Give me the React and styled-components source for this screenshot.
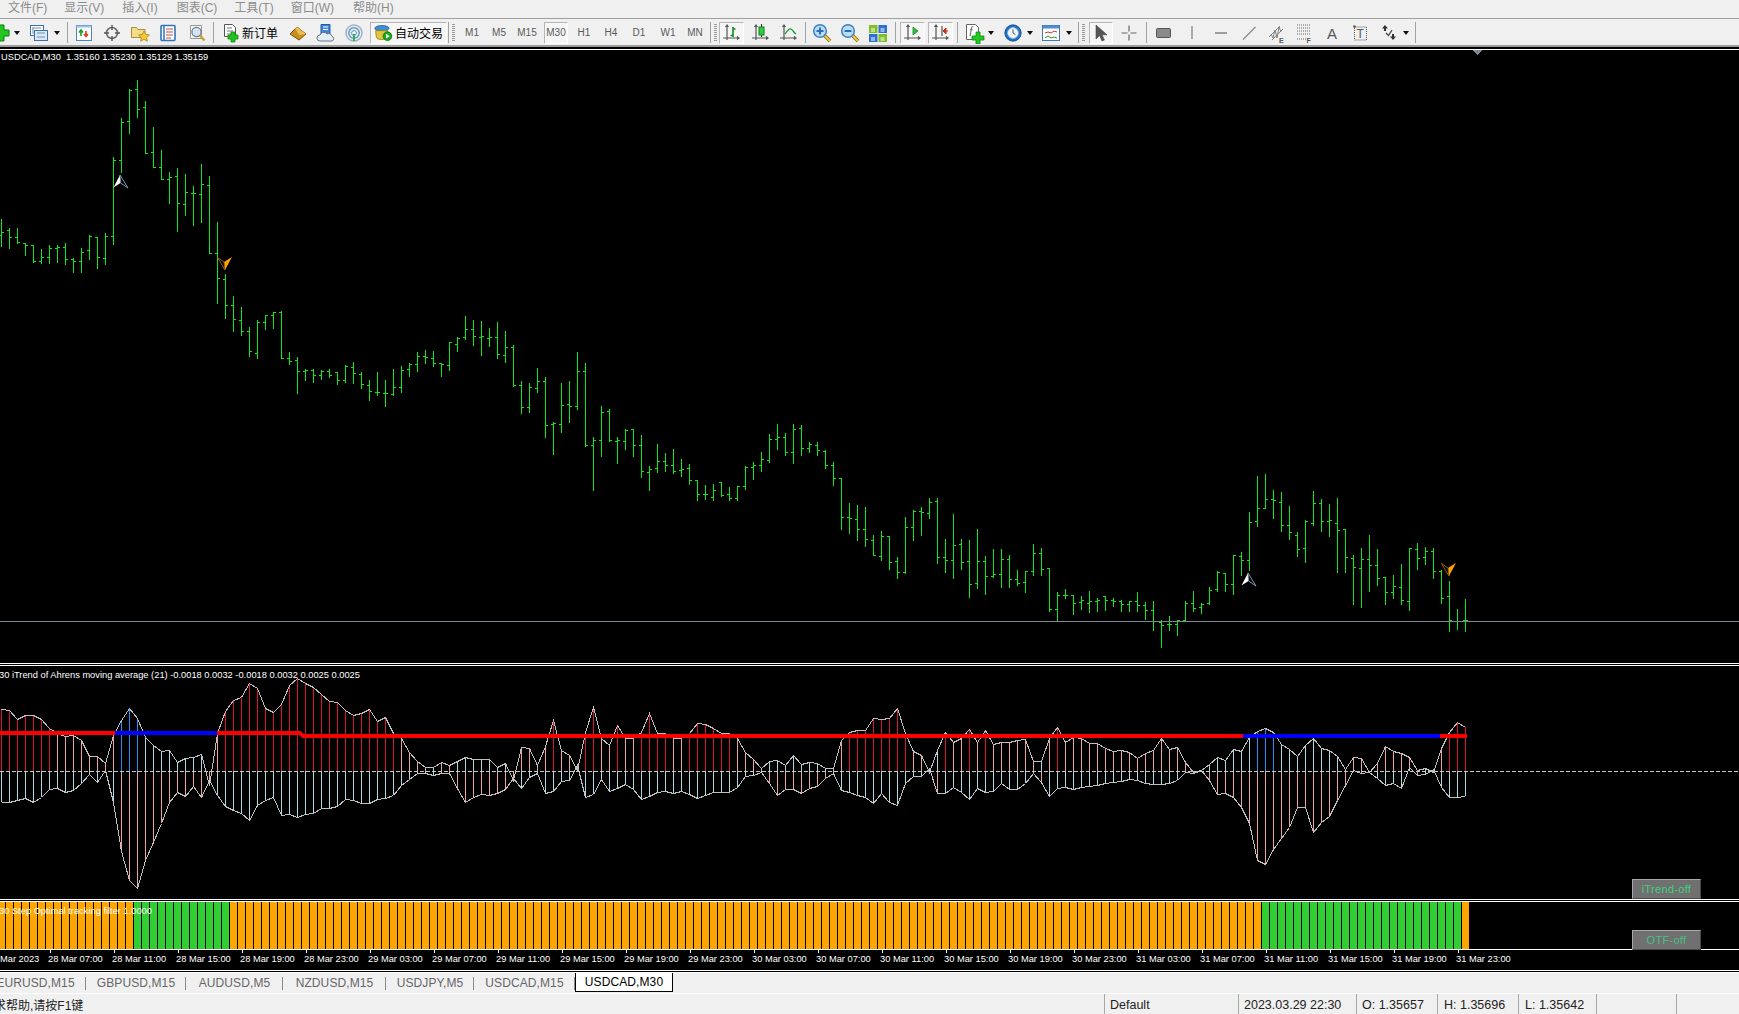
import React from "react";
import styled, { createGlobalStyle } from "styled-components";

const Global = createGlobalStyle`
  html, body { margin: 0; padding: 0; background: #000; overflow: hidden; }
  #root { width: 1739px; height: 1014px; overflow: hidden; }
`;

const UI = `"Liberation Sans", "Noto Sans CJK SC", sans-serif`;

const Page = styled.div`
  width: 1739px; height: 1014px; display: flex; flex-direction: column;
  background: #000; font-family: ${UI}; overflow: hidden;
`;
const MenuBar = styled.nav`
  height: 18px; flex: none; display: flex; background: #f0f0f0; padding-left: 8px;
  border-bottom: 1px solid #a0a0a0; box-sizing: content-box; font-size: 12px; color: #8c8c8c; line-height: 16px;
`;
const MenuItem = styled.span`margin-right: ${p => p.$gap}px; white-space: nowrap;`;

const Toolbar = styled.div`
  height: 25px; flex: none; display: flex; align-items: center; background: #f0f0f0;
  border-bottom: 2px solid #9c9c9c; border-top: 0; padding-top: 1px; overflow: hidden;
`;
const Row = styled.div`display: flex; align-items: center; margin-left: -6px; height: 100%;`;
const Slot = styled.div`
  width: ${p => p.$w}px; flex: none; height: 100%; display: flex; align-items: center; justify-content: center;
`;
const Pressed = styled(Slot)`
  height: 22px; box-sizing: border-box; background: #f6f6f6;
  border: 1px solid; border-color: #b6b6b6 #fff #fff #b6b6b6;
`;
const Spacer = styled.div`width: ${p => p.$w}px; flex: none;`;
const Sep = styled(Slot)`
  &::before { content: ""; width: 1px; height: 21px; background: #a2a2a2; }
`;
const Grip = styled.div`
  width: 3px; height: 18px; flex: none; margin: 0 ${p => p.$m || 0}px;
  background: repeating-linear-gradient(to bottom, #9a9a9a 0 1px, transparent 1px 2px);
`;
const Frame = styled(Slot)`font-size: 10px; color: #5a5a5a;`;
const PressedFrame = styled(Pressed)`font-size: 10px; color: #5a5a5a;`;
const Drop = styled(Slot)`
  &::before { content: ""; border: 3px solid transparent; border-top: 4px solid #111; border-bottom: 0; }
`;
const OrderButton = styled(Slot)`font-size: 12px; color: #000; gap: 1px; justify-content: flex-start; padding-left: 5px; box-sizing: border-box; white-space: nowrap;`;
const AutoButton = styled(Pressed)`font-size: 12px; color: #000; gap: 2px; white-space: nowrap;`;
const Glyph = styled.svg`flex: none; display: block;`;

const Rule = styled.div`height: ${p => p.$h}px; flex: none; background: ${p => p.$c};`;
const Pane = styled.section`
  position: relative; flex: none; height: ${p => p.$h}px; background: #000; overflow: visible;
`;
const Plot = styled.svg`display: block; width: 1739px; height: 100%; overflow: hidden;`;
const PaneLabel = styled.div`
  position: absolute; left: ${p => p.$left || 0}px; top: ${p => p.$top}px; white-space: nowrap;
  font-size: 9.3px; line-height: 12px; color: #fff; pointer-events: none;
`;
const PaneButton = styled.div`
  position: absolute; left: 1632px; bottom: ${p => p.$bottom}px; width: 69px; height: 20px; box-sizing: border-box;
  display: flex; align-items: center; justify-content: center; z-index: 2;
  background: #707070; border: 1px solid; border-color: #a8a8a8 #4a4a4a #4a4a4a #a8a8a8;
  font-size: 11px; letter-spacing: .3px; color: ${p => p.$c};
`;
const Axis = styled.div`
  height: 20px; flex: none; display: flex; background: #000; color: #fff; font-size: 9.3px; line-height: 18px; overflow: hidden;
`;
const AxisHead = styled.div`width: 49px; flex: none; white-space: nowrap; text-align: right; padding-right: 13px; box-sizing: border-box;`;
const AxisCell = styled.div`
  width: 64px; flex: none; position: relative; white-space: nowrap; text-indent: -1px;
  &::before { content: ""; position: absolute; left: 1px; top: 0; width: 1px; height: 3px; background: #fff; }
`;
const TabStrip = styled.div`
  height: 20px; flex: none; display: flex; background: #f0f0f0; overflow: hidden; font-size: 12px;
`;
const Tabs = styled.div`display: flex; margin-left: -15px; height: 100%;`;
const Tab = styled.div`
  width: ${p => p.$w}px; flex: none; box-sizing: border-box; display: flex; align-items: center; justify-content: center;
  color: ${p => (p.$active ? "#000" : "#666")}; background: ${p => (p.$active ? "#fff" : "transparent")};
  position: relative; white-space: nowrap; letter-spacing: .1px;
  ${p => p.$active ? "border: 1px solid #000; border-top: 0; height: 19px;" : `
    &::after { content: ""; position: absolute; right: 0; top: 4px; height: 13px; width: 1px; background: #8a8a8a; }`}
`;
const StatusBar = styled.footer`
  flex: 1; display: grid; grid-template-columns: 1105px 134px 118px 81px 81px 78px 80px 1fr;
  background: #f0f0f0; font-size: 12.5px; color: #222; border-top: 1px solid #fff; box-sizing: border-box;
`;
const StatusCell = styled.div`
  display: flex; align-items: center; overflow: hidden; white-space: nowrap; padding-left: ${p => p.$pad || 5}px; height: 21px;
  border-right: 1px solid #a8a8a8;
  &:first-child { padding-left: 0; margin-left: -6px; font-size: 12px; }
  &:last-child { border-right: 0; }
`;

/* ---- market data: page pixel rows of high, low, open, close for each M30 bar ---- */
const ohlc = [
219,246,235,232, 228,248,230,237, 228,243,237,242, 243,255,243,245, 245,262,245,261, 249,263,261,257, 245,263,257,248, 245,262,248,247,
243,264,247,259, 258,272,259,261, 248,272,261,252, 235,259,250,236, 237,268,237,257, 233,264,258,236, 157,244,236,160, 118,172,160,122,
89,133,121,90, 80,117,89,109, 101,153,107,153, 127,167,152,167, 150,179,167,179, 172,203,179,177, 168,231,176,203, 174,215,204,192,
186,225,193,193, 164,222,194,184, 176,253,185,253, 222,303,253,278, 274,318,279,305, 296,331,305,319, 307,335,320,331, 327,356,331,351,
320,358,353,322, 315,329,322,315, 312,328,315,312, 311,358,312,358, 352,364,358,361, 357,393,360,371, 369,380,371,370, 369,382,370,375,
370,379,375,371, 369,377,371,375, 372,384,372,380, 365,382,380,366, 362,383,367,373, 372,388,374,384, 380,400,385,391, 372,395,392,392,
380,406,393,393, 369,395,394,387, 366,392,387,370, 363,376,369,364, 352,371,364,356, 350,363,356,357, 351,366,358,363, 363,376,363,364,
342,370,365,342, 337,351,344,338, 316,339,337,329, 320,345,329,336, 321,355,337,336, 328,346,338,337, 322,358,337,354, 331,362,355,347,
345,386,347,385, 381,413,385,407, 383,412,407,387, 368,392,388,381, 377,437,381,425, 422,454,424,423, 383,432,424,405, 381,422,404,406,
352,409,406,371, 363,446,371,445, 437,490,445,440, 406,456,440,412, 409,441,411,440, 437,463,441,440, 429,449,441,430, 429,456,429,445,
435,477,445,471, 466,490,472,469, 444,472,468,461, 453,471,461,465, 449,473,465,471, 459,476,470,469, 464,484,468,480, 480,500,480,494,
485,499,494,494, 484,500,497,490, 482,496,482,495, 487,500,494,498, 486,500,498,486, 466,489,486,467, 462,479,467,465, 452,471,465,459,
434,462,460,439, 424,449,439,437, 433,455,437,452, 424,463,452,429, 425,455,428,448, 442,452,448,444, 442,455,445,450, 450,468,451,465,
462,485,465,478, 478,529,478,517, 503,533,517,518, 505,540,519,529, 507,546,529,539, 535,555,540,555, 531,560,556,536, 536,569,536,562,
557,578,561,572, 517,573,572,527, 510,540,527,511, 507,535,511,512, 498,518,513,502, 498,563,501,557, 539,572,557,560, 514,578,560,545,
539,569,544,562, 540,597,561,584, 529,588,583,561, 556,594,561,576, 549,577,576,574, 549,587,574,559, 555,587,559,579, 570,585,579,583,
571,592,582,571, 544,575,571,553, 548,575,553,569, 568,611,568,609, 592,621,609,595, 589,598,595,595, 595,614,595,603, 596,609,602,600,
591,612,603,601, 598,611,601,600, 596,610,596,600, 598,606,600,601, 600,611,601,604, 601,611,604,601, 592,611,601,605, 602,619,605,610,
601,630,610,621, 620,647,622,625, 616,630,624,624, 620,635,624,620, 601,621,620,603, 591,611,603,608, 603,613,607,604, 587,604,603,590,
571,591,589,572, 573,591,573,584, 555,594,584,555, 552,575,556,560, 512,570,560,522, 476,526,521,508, 474,508,508,499, 490,518,499,500,
492,531,502,525, 506,539,525,532, 532,556,535,549, 520,562,548,521, 491,525,523,503, 499,531,503,521, 504,536,521,520, 498,572,523,530,
529,572,529,557, 555,604,558,567, 548,607,568,559, 535,591,559,565, 549,585,565,578, 577,604,577,592, 575,598,592,586, 564,604,587,600,
548,610,601,548, 543,569,549,558, 547,564,557,551, 548,578,551,571, 570,603,571,598, 581,631,596,620, 609,629,621,621, 599,631,620,620,
];
const barX = i => 1 + 8 * i;
const barCount = ohlc.length / 4;
let barPath = "";
for (let i = 0; i < barCount; i++) {
  const [h, l, o, c] = ohlc.slice(i * 4, i * 4 + 4);
  const x = barX(i);
  barPath += `M${x + .5} ${h}V${l + 1}M${x - 2} ${o + .5}H${x}M${x + 1} ${c + .5}H${x + 3}`;
}

const fromZoom = (base, list) => list.map(z => Math.round(base + z / 3));
const upper = [
  ...fromZoom(660, [148,150,178,165,165,178,205,220,228,225,240,287,287,310,225,180,143,175,232,255,272,270,305,293,292,283,375,220,153,120,110,70,83,143,157,133,75,55,70,82,103,122,125,150,165,160,148,183,172,220]),
  ...fromZoom(690, [145,185,212,232,232,215,225,212,200,208,208,208,232,220,270,172,175,225,168,90,180,195,240,125,50,145,165,105,145,145,125,68,130,130,145,145,130,98,103,113,130,130,145,185,208,235,213,210,225,195,222,217,218,235,235,150,125,121,121,83,87,85,55,130,183,195,245,180,125,157,145,118,155,120,163,157,155,150,148,213,213,145,112,157,140,145,160,160,175,183,181,186,203,190,180,145,177,172,215,245]),
  ...fromZoom(680, [270,252,230,240,208,212,170,152,145,155,192,207,228,195,175,205,210,228,268,232,235,275,248,197,212,218,232,270,263,275,205,155,127,140]),
];
const lower = [
  ...fromZoom(660, [427,425,420,415,427,410,388,385,395,390,370,343,366,330,425,572,660,685,600,545,490,425,395,408,378,410,360,405,437,450,460,480,435,420,410,465,462,470,462,460,445,445,437,417,420,428,430,418,415,405]),
  ...fromZoom(690, [285,268,250,250,256,250,250,295,337,322,312,316,310,296,265,295,262,250,310,303,272,270,225,322,312,268,303,295,283,298,328,318,305,303,310,303,312,325,315,307,307,307,290,258,254,245,280,315,298,298,308,293,288,263,250,300,306,316,322,340,310,335,346,280,258,258,235,310,310,290,305,328,295,307,303,280,298,298,278,250,275,318,295,290,298,292,287,285,280,277,272,268,270,278,283,283,280,270,245,250]),
  ...fromZoom(680, [270,300,342,340,352,382,430,540,552,507,475,440,380,380,455,425,408,360,315,270,278,275,295,315,310,323,260,285,282,267,322,352,352,348]),
];
const ZERO = 771;
const inBlue = i => (i >= 15 && i <= 26) || (i >= 156 && i <= 180);
const lineAt = i => (i < 38 ? 733 : 736);
const CRIMSON = "#dc143c", PINK = "#eea0a4", SKY = "#add8e6", DODGER = "#1e90ff";
const upColor = (i) => {
  const u = ZERO - upper[i], d = lower[i] - ZERO;
  if (upper[i] < lineAt(i)) return inBlue(i) ? DODGER : CRIMSON;
  return u > d ? PINK : SKY;
};
const downColor = (i) => (ZERO - upper[i] >= lower[i] - ZERO ? SKY : PINK);
const poly = a => a.map((y, i) => `${barX(i) + .5},${y + .5}`).join(" ");

const orangeGreen = i => (i >= 17 && i <= 28) || (i >= 158 && i <= 182);

const UpArrow = ({ x, y }) => (
  <g transform={`translate(${x} ${y})`}>
    <polygon points="7,0 .5,12.5 7.5,8" fill="#fff" />
    <polygon points="7,0 15,13 7.5,8" fill="#000" stroke="#8fa8c4" strokeWidth=".9" />
  </g>
);
const DownArrow = ({ x, y }) => (
  <g transform={`translate(${x} ${y})`}>
    <polygon points="8,13 15,0 7,5" fill="#ffa500" />
    <polygon points="8,13 .5,.5 7,5" fill="#000" stroke="#a86c08" strokeWidth=".9" />
  </g>
);

/* ---- toolbar drawings ---- */
const Ic = ({ w = 20, h = 20, vw, vh, children }) => <Glyph width={w} height={h} viewBox={`0 0 ${vw || w} ${vh || h}`}>{children}</Glyph>;
const axes = <path d="M5 2v15M1 15h16M3.5 4 5 2l1.5 2M15 13.5l2 1.5-2 1.5" fill="none" stroke="#555" strokeWidth="1.2" />;
const Icons = {
  plus: <Ic><path d="M7 2h6v5h5v6h-5v5H7v-5H2V7h5z" fill="#22c622" stroke="#0d7d0d" /></Ic>,
  profiles: <Ic><rect x="1.5" y="2.5" width="13" height="10" fill="#fff" stroke="#3e6fa6" /><rect x="5.5" y="7.5" width="13" height="10" fill="#dbe9f7" stroke="#3e6fa6" /><path d="M3 5h9M4 5v6M8 10h8M8 14h8" stroke="#6f8fb0" /></Ic>,
  watch: <Ic><rect x="2.5" y="2.5" width="15" height="15" fill="#fff" stroke="#4a86c5" /><path d="M2.5 3.5h15" stroke="#9cc3e8" strokeWidth="2" /><path d="M7 13V8M5 9.5 7 7l2 2.5" fill="none" stroke="#18a018" strokeWidth="1.6" /><path d="M12 8v5M10 11l2 2.5 2-2.5" fill="none" stroke="#d8402a" strokeWidth="1.6" /></Ic>,
  target: <Ic><circle cx="10" cy="10" r="5.5" fill="none" stroke="#666" strokeWidth="1.5" /><path d="M10 2v5M10 13v5M2 10h5M13 10h5" stroke="#555" strokeWidth="1.4" /></Ic>,
  folder: <Ic><path d="M1.5 4.5h5l1.5 2h7v8h-13.5z" fill="#f3dc8a" stroke="#a98d3a" /><path d="M14 8l1.7 3.4 3.8.5-2.8 2.6.7 3.7-3.4-1.8-3.4 1.8.7-3.7-2.8-2.6 3.8-.5z" fill="#f6c92e" stroke="#a98520" strokeWidth=".8" /></Ic>,
  book: <Ic><rect x="3" y="2.5" width="14" height="15" rx="1" fill="#fff" stroke="#2f74bd" strokeWidth="1.6" /><path d="M6 3v14" stroke="#2f74bd" strokeWidth="1.5" /><path d="M8 6h7M8 9h7M8 12h7M8 15h5" stroke="#c04a4a" /></Ic>,
  scope: <Ic><path d="M3.5 2.5h11v13h-11z" fill="#f4f4f4" stroke="#9a9a9a" /><circle cx="9.5" cy="9" r="4.6" fill="#d5e5ef" stroke="#6d7f90" strokeWidth="1.3" /><path d="M13 12.5l4.5 5" stroke="#c9a22e" strokeWidth="2.4" /></Ic>,
  order: <Ic><path d="M3.5 1.5h8l3 3v9h-11z" fill="#fff" stroke="#555" /><path d="M6 5h5M6 8h6M6 11h4" stroke="#777" /><path d="M10 9h4v3h3v4h-3v3h-4v-3H7v-4h3z" fill="#1ec31e" stroke="#0f8a0f" strokeWidth=".8" /></Ic>,
  diamond: <Ic><path d="M2 11l7-7 9 7-7 6z" fill="#c88f1f" stroke="#7d520e" /><path d="M9 4l9 7-7 1-4-7" fill="#eabe55" /></Ic>,
  cloud: <Ic><path d="M5 1.5h9v11H5z" fill="#3d86d8" stroke="#235c9e" /><path d="M7 4h5M7 6.5h5" stroke="#fff" /><path d="M4 18a3 3 0 0 1 0-6 4 4 0 0 1 7-1 3.4 3.4 0 0 1 5 2.4A2.4 2.4 0 0 1 16 18z" fill="#e5edf4" stroke="#65768a" /></Ic>,
  signal: <Ic><circle cx="10" cy="10" r="8" fill="none" stroke="#9cb3c6" strokeWidth="1.5" /><circle cx="10" cy="10" r="5.2" fill="none" stroke="#5c97c6" strokeWidth="1.5" /><circle cx="10" cy="10" r="2.4" fill="#fff" stroke="#4e87b4" /><path d="M10 11v7" stroke="#30b050" strokeWidth="2" /></Ic>,
  auto: <Ic w={19} h={18} vw={24} vh={22}><ellipse cx="10" cy="5" rx="9" ry="3.5" fill="#3f8fd6" stroke="#24608f" /><path d="M2 8h15l-1 9c-2 3-11 3-13 0z" fill="#e3c53a" stroke="#917d1e" /><circle cx="17" cy="15" r="5.5" fill="#1fa81f" stroke="#0c6e0c" /><path d="M15.2 12v6l4.6-3z" fill="#fff" /></Ic>,
  bars: <Ic>{axes}<path d="M11 4v10M11 12.5H8.5M11 6h2.5" stroke="#10901a" strokeWidth="1.6" fill="none" /></Ic>,
  candle: <Ic>{axes}<path d="M10.5 1v13" stroke="#222" /><rect x="8" y="4" width="5" height="8" fill="#2bd23a" stroke="#157a1f" /></Ic>,
  line: <Ic>{axes}<path d="M6 11c2-3 4-6 6-5s3 4 5 5" fill="none" stroke="#1e9a34" strokeWidth="1.3" /></Ic>,
  zoomIn: <Ic><path d="M12.5 12.5l5.5 5.5" stroke="#8b6a12" strokeWidth="3.6" /><path d="M12.5 12.5l5.5 5.5" stroke="#ecc84a" strokeWidth="2" /><circle cx="8" cy="8" r="6.3" fill="#bcdcf4" stroke="#3b83c5" strokeWidth="1.5" /><path d="M4.5 8h7M8 4.5v7" stroke="#2a70b8" strokeWidth="2" /></Ic>,
  zoomOut: <Ic><path d="M12.5 12.5l5.5 5.5" stroke="#8b6a12" strokeWidth="3.6" /><path d="M12.5 12.5l5.5 5.5" stroke="#ecc84a" strokeWidth="2" /><circle cx="8" cy="8" r="6.3" fill="#bcdcf4" stroke="#3b83c5" strokeWidth="1.5" /><path d="M4.5 8h7" stroke="#2a70b8" strokeWidth="2" /></Ic>,
  grid: <Ic><rect x="1" y="2" width="8.5" height="8" fill="#7fbf25" /><rect x="10.5" y="2" width="8.5" height="8" fill="#2f6fd0" /><rect x="1" y="11" width="8.5" height="8" fill="#2f6fd0" /><rect x="10.5" y="11" width="8.5" height="8" fill="#7fbf25" /><path d="M3 6h4M12.5 6h4M3 15h4M12.5 15h4M3 8h4M12.5 8h4M3 17h4M12.5 17h4" stroke="#fff" /></Ic>,
  shift: <Ic>{axes}<path d="M10 4v8l5-4z" fill="#2fbf3a" stroke="#137a1c" strokeWidth=".7" /></Ic>,
  scroll: <Ic>{axes}<path d="M11 3v10" stroke="#333" /><path d="M12 8l5 0M12 8l3-3v6z" fill="#c8301c" stroke="#c8301c" /></Ic>,
  indicator: <Ic w={24} h={22}><path d="M3.5 2.5h9l3 3v12h-12z" fill="#fff" stroke="#666" /><text x="6.5" y="12" fontSize="10" fontFamily="Liberation Serif, serif" fontStyle="italic" fill="#333">f</text><path d="M13 10h4v4h4v4h-4v4h-4v-4H9v-4h4z" fill="#20c820" stroke="#0e8a0e" strokeWidth=".8" /></Ic>,
  clock: <Ic w={18} h={18} vw={22} vh={22}><circle cx="11" cy="11" r="10" fill="#1e6fc0" stroke="#134d8c" /><circle cx="11" cy="11" r="6.6" fill="#eef5fb" stroke="#9cc4e6" /><path d="M11 6.5V11l3 2" fill="none" stroke="#555" strokeWidth="1.2" /></Ic>,
  template: <Ic w={22} h={20}><rect x="1.5" y="2.5" width="17" height="15" fill="#fff" stroke="#3f7ab6" /><path d="M2 4h16" stroke="#4f8fd0" strokeWidth="3" /><path d="M4 10l3-1 3 1 3-2 3 1" fill="none" stroke="#c83a2c" /><path d="M4 15l3-2 3 2 3-1 3 1" fill="none" stroke="#2c9a3a" /></Ic>,
  cursor: <Ic><path d="M5 2v14l3.6-3.4L11 18l2.4-1-2.4-5.2h5z" fill="#555" stroke="#444" strokeWidth=".6" /></Ic>,
  cross: <Ic><path d="M10 2.5v6M10 11.5v6M2.5 10h6M11.5 10h6" stroke="#666" strokeWidth="1.2" /></Ic>,
  rect: <Ic w={22} h={14}><rect x="3.5" y="2.5" width="14" height="9" rx="1" fill="#8a8a8a" stroke="#555" /></Ic>,
  vline: <Ic w={6} h={16}><path d="M3 1v13" stroke="#666" /></Ic>,
  hline: <Ic w={16} h={6}><path d="M2 3h12" stroke="#666" strokeWidth="1.2" /></Ic>,
  trend: <Ic w={16} h={16}><path d="M2 14.5 14.5 2" stroke="#888" strokeWidth="1.3" /></Ic>,
  channel: <Ic w={20} h={22}><path d="M2 15 13 4M5 18 16 7M4 12l2 4 2-8 2 8 2-11 2 5" stroke="#777" fill="none" strokeWidth=".9" /><text x="12" y="20.5" fontSize="7" fontWeight="bold" fontFamily="Liberation Sans" fill="#555">E</text></Ic>,
  fibo: <Ic w={20} h={22}><path d="M2 3h13M2 6h13M2 9h13M2 12h13M2 17h9" stroke="#666" strokeDasharray="1 1" /><text x="11.5" y="21" fontSize="7" fontWeight="bold" fontFamily="Liberation Sans" fill="#555">F</text></Ic>,
  letter: <Ic w={14} h={16}><text x="1" y="14" fontSize="15" fontFamily="Liberation Sans" fill="#555">A</text></Ic>,
  label: <Ic w={18} h={18}><rect x="2.5" y="3" width="12" height="13" fill="none" stroke="#555" strokeDasharray="1 1" /><circle cx="2.5" cy="2.5" r="1.3" fill="#555" /><text x="4.4" y="14" fontSize="12" fontFamily="Liberation Sans" fill="#555">T</text></Ic>,
  arrows: <Ic w={18} h={18}><path d="M5 1l3 3.5H6V7H4V4.5H2zM13 16l-3-3.5h2V10h2v2.5h2z" fill="#333" /><path d="M6 9l2.5 2.5L12 6" fill="none" stroke="#444" strokeWidth="1.3" /></Ic>,
};

const axisLabels = ["28 Mar 07:00","28 Mar 11:00","28 Mar 15:00","28 Mar 19:00","28 Mar 23:00","29 Mar 03:00","29 Mar 07:00","29 Mar 11:00","29 Mar 15:00","29 Mar 19:00","29 Mar 23:00","30 Mar 03:00","30 Mar 07:00","30 Mar 11:00","30 Mar 15:00","30 Mar 19:00","30 Mar 23:00","31 Mar 03:00","31 Mar 07:00","31 Mar 11:00","31 Mar 15:00","31 Mar 19:00","31 Mar 23:00"];
const tabs = [["EURUSD,M15",101],["GBPUSD,M15",100],["AUDUSD,M5",97],["NZDUSD,M15",103],["USDJPY,M5",88],["USDCAD,M15",101],["USDCAD,M30",98,true]];
const menus = [["文件(F)",17],["显示(V)",18],["插入(I)",19],["图表(C)",17],["工具(T)",17],["窗口(W)",19],["帮助(H)",0]];

export default function App() {
  return (
    <Page>
      <Global />
      <MenuBar>{menus.map(([t, g]) => <MenuItem key={t} $gap={g}>{t}</MenuItem>)}</MenuBar>
      <Toolbar>
        <Row>
          <Slot $w={14}>{Icons.plus}</Slot><Drop $w={18} />
          <Slot $w={26}>{Icons.profiles}</Slot><Drop $w={10} /><Sep $w={10} />
          <Slot $w={24}>{Icons.watch}</Slot><Slot $w={32}>{Icons.target}</Slot><Slot $w={24}>{Icons.folder}</Slot>
          <Slot $w={32}>{Icons.book}</Slot><Slot $w={26}>{Icons.scope}</Slot><Sep $w={6} />
          <OrderButton $w={67}>{Icons.order}<span>新订单</span></OrderButton>
          <Slot $w={30}>{Icons.diamond}</Slot><Slot $w={26}>{Icons.cloud}</Slot><Slot $w={30}>{Icons.signal}</Slot>
          <Spacer $w={1} /><AutoButton $w={77}>{Icons.auto}<span>自动交易</span></AutoButton>
          <Sep $w={3} /><Grip $m={2} /><Spacer $w={2} />
          <Frame $w={26}>M1</Frame><Frame $w={28}>M5</Frame><Frame $w={28}>M15</Frame>
          <Spacer $w={3} /><PressedFrame $w={24}>M30</PressedFrame><Spacer $w={3} />
          <Frame $w={26}>H1</Frame><Frame $w={28}>H4</Frame><Frame $w={28}>D1</Frame><Frame $w={30}>W1</Frame><Frame $w={24}>MN</Frame>
          <Sep $w={6} /><Grip $m={1} /><Spacer $w={1} />
          <Pressed $w={25}>{Icons.bars}</Pressed><Slot $w={34}>{Icons.candle}</Slot><Slot $w={22}>{Icons.line}</Slot><Sep $w={10} />
          <Slot $w={24}>{Icons.zoomIn}</Slot><Slot $w={32}>{Icons.zoomOut}</Slot><Slot $w={24}>{Icons.grid}</Slot><Sep $w={10} />
          <Pressed $w={25}>{Icons.shift}</Pressed><Spacer $w={3} /><Pressed $w={25}>{Icons.scroll}</Pressed><Sep $w={8} />
          <Spacer $w={3} /><Slot $w={22}>{Icons.indicator}</Slot><Drop $w={10} /><Spacer $w={5} /><Slot $w={24}>{Icons.clock}</Slot><Drop $w={10} />
          <Spacer $w={5} /><Slot $w={24}>{Icons.template}</Slot><Drop $w={10} /><Sep $w={8} /><Grip /><Spacer $w={4} />
          <Pressed $w={24}>{Icons.cursor}</Pressed><Slot $w={32}>{Icons.cross}</Slot><Sep $w={2} />
          <Slot $w={34}>{Icons.rect}</Slot><Slot $w={22}>{Icons.vline}</Slot><Slot $w={36}>{Icons.hline}</Slot><Slot $w={20}>{Icons.trend}</Slot>
          <Slot $w={36}>{Icons.channel}</Slot><Slot $w={20}>{Icons.fibo}</Slot><Slot $w={36}>{Icons.letter}</Slot><Slot $w={20}>{Icons.label}</Slot>
          <Spacer $w={6} /><Slot $w={24}>{Icons.arrows}</Slot><Spacer $w={0} /><Drop $w={10} /><Sep $w={8} />
        </Row>
      </Toolbar>
      <Rule $h={2} $c="#000" />
      <Rule $h={1} $c="#fff" />

      <Pane $h={613}>
        <Plot viewBox="0 50 1739 613" shapeRendering="crispEdges">
          <path d={barPath} stroke="#14e814" fill="none" />
          <path d="M0 621.5H1739" stroke="#778899" />
          <polygon points="1472,50 1482,50 1477,55" fill="#778899" />
          <g shapeRendering="auto">
            <UpArrow x={113} y={175} /><UpArrow x={1241} y={573} />
            <DownArrow x={217} y={257} /><DownArrow x={1441} y={563} />
          </g>
        </Plot>
        <PaneLabel $left={1} $top={1}>USDCAD,M30&nbsp; 1.35160 1.35230 1.35129 1.35159</PaneLabel>
      </Pane>
      <Rule $h={1} $c="#fff" /><Rule $h={1} $c="#000" /><Rule $h={1} $c="#fff" />

      <Pane $h={233}>
        <Plot viewBox="0 666 1739 233" shapeRendering="crispEdges">
          {upper.map((y, i) => <path key={i} d={`M${barX(i) + .5} ${ZERO}V${y}`} stroke={upColor(i)} />)}
          {lower.map((y, i) => <path key={i} d={`M${barX(i) + .5} ${ZERO}V${y}`} stroke={downColor(i)} />)}
          <polyline points={poly(upper)} fill="none" stroke="#c0c0c0" />
          <polyline points={poly(lower)} fill="none" stroke="#c0c0c0" />
          <path d="M0 771.5H1739" stroke="#c8c8c8" strokeDasharray="4 2" />
          <path d="M0 733H115M217 733H300L303 736H1243M1440 736H1467" stroke="#ff0000" strokeWidth="4" fill="none" />
          <path d="M115 733H217M1243 736H1440" stroke="#0000ff" strokeWidth="4" fill="none" />
        </Plot>
        <PaneLabel $left={-1} $top={3}>30 iTrend of Ahrens moving average (21) -0.0018 0.0032 -0.0018 0.0032 0.0025 0.0025</PaneLabel>
        <PaneButton $bottom={0} $c="#3fd080">iTrend-off</PaneButton>
      </Pane>
      <Rule $h={1} $c="#fff" /><Rule $h={1} $c="#000" /><Rule $h={1} $c="#fff" />

      <Pane $h={47}>
        <Plot viewBox="0 902 1739 47" shapeRendering="crispEdges">
          {ohlc.slice(0, barCount).map((_, i) => (
            <rect key={i} x={8 * i - 2} y={902} width={7} height={47} fill={orangeGreen(i) ? "#32cd32" : "#ffa500"} />
          ))}
        </Plot>
        <PaneLabel $left={-1} $top={3}>30 Step Optimal tracking filter 1.0000</PaneLabel>
        <PaneButton $bottom={-1} $c="#48c080">OTF-off</PaneButton>
      </Pane>
      <Rule $h={1} $c="#fff" />
      <Axis>
        <AxisHead>Mar 2023</AxisHead>
        {axisLabels.map(t => <AxisCell key={t}>{t}</AxisCell>)}
      </Axis>
      <Rule $h={1} $c="#fff" /><Rule $h={1} $c="#000" /><Rule $h={1} $c="#fff" />
      <TabStrip>
        <Tabs>{tabs.map(([t, w, a]) => <Tab key={t} $w={w} $active={a}>{t}</Tab>)}</Tabs>
      </TabStrip>
      <StatusBar>
        <StatusCell>求帮助,请按F1键</StatusCell>
        <StatusCell>Default</StatusCell>
        <StatusCell>2023.03.29 22:30</StatusCell>
        <StatusCell>O: 1.35657</StatusCell>
        <StatusCell $pad={6}>H: 1.35696</StatusCell>
        <StatusCell $pad={6}>L: 1.35642</StatusCell>
        <StatusCell />
        <StatusCell />
      </StatusBar>
    </Page>
  );
}
